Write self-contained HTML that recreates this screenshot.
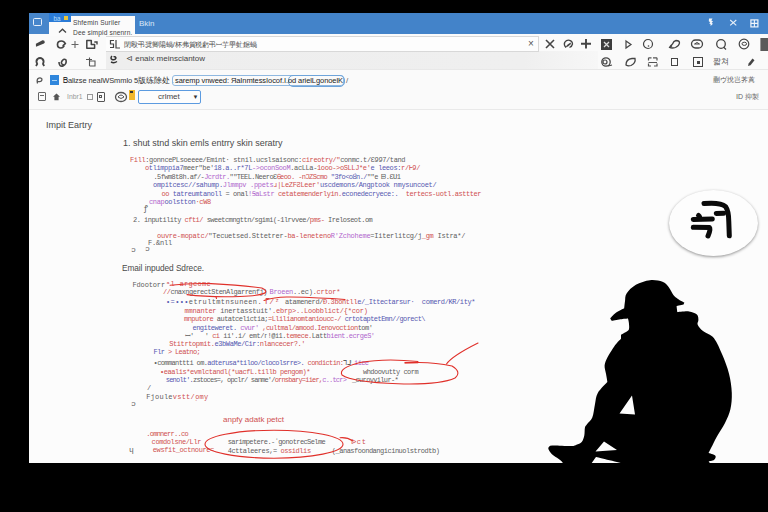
<!DOCTYPE html>
<html><head><meta charset="utf-8">
<style>
html,body{margin:0;padding:0;}
body{width:768px;height:512px;background:#000;position:relative;overflow:hidden;font-family:"Liberation Sans",sans-serif;}
.a{position:absolute;white-space:pre;}
.win{position:absolute;left:29px;top:13px;width:739px;height:450px;background:#fcfcfc;}
.tb{position:absolute;left:29px;top:13px;width:739px;height:21px;background:#4383c9;}
.m{font-family:"Liberation Mono",monospace;font-size:6.6px;line-height:8px;}
.s{font-size:9px;color:#333;}
.r{color:#c23a3a;}
.b{color:#3b3f9e;}
.k{color:#444;}
.p{color:#a04ac0;}
svg{position:absolute;overflow:visible;}
</style></head><body>
<div class="win"></div>
<div class="a" style="left:29px;top:33px;width:739px;height:76px;background:#fafafa;"></div>
<div class="tb"></div>
<!-- title bar left square -->
<div class="a" style="left:29px;top:13px;width:20px;height:20.5px;background:#4786cb;"></div>
<div class="a" style="left:33px;top:18.3px;width:9px;height:7.8px;border:1.2px solid #e8f0fa;border-top-width:1.8px;border-radius:1.5px;box-sizing:border-box;"></div>
<!-- small tab strip -->
<div class="a" style="left:49px;top:13px;width:22px;height:9.3px;background:#2b7bd6;"></div>
<div class="a" style="left:53.5px;top:14px;font-size:6.3px;color:#b8dcfa;line-height:9px;">ba</div>
<div class="a" style="left:64px;top:15.5px;width:4px;height:4px;background:#e9c53a;"></div>
<div class="a" style="left:49px;top:22.3px;width:22px;height:13.7px;background:#fbfbfb;"></div>
<div class="a" style="left:71px;top:16px;width:64px;height:20px;background:#fbfbfb;"></div>
<div class="a" style="left:73px;top:17.5px;font-size:6.6px;line-height:9px;color:#444;letter-spacing:0.15px;">Shfemin Suriler</div>
<div class="a" style="left:73px;top:27.5px;font-size:6.6px;line-height:9px;color:#444;letter-spacing:0.15px;">Dee simpid snenrn.</div>
<svg style="left:58px;top:28px" width="9" height="6"><path d="M1 4.5 L4.5 1.2 L8 4.5" fill="none" stroke="#444" stroke-width="1.3"/></svg>
<div class="a" style="left:139px;top:19px;font-size:8px;line-height:9px;color:#dbe8f7;">Bkin</div>

<!-- address bar area -->
<div class="a" style="left:106px;top:51px;width:492px;height:17.5px;background:linear-gradient(90deg,#eeeeee 0%,#efefef 85%,#f7f7f7 100%);"></div>
<div class="a" style="left:29px;top:68.5px;width:739px;height:1px;background:#e8e8e8;"></div>
<div class="a" style="left:106px;top:36px;width:432px;height:14px;background:#fdfdfd;border:1px solid #d8d8d8;border-left:none;"></div>
<div class="a" style="left:124px;top:39.5px;font-size:7.3px;line-height:9px;color:#444;letter-spacing:-0.05px;">閉殴弔奨卿陽蝸/杯弗賀税虧弔ꟷ芋甼虻鋸蝸</div>
<div class="a" style="left:126px;top:54px;font-size:8px;line-height:9px;color:#444;">⊲ enaix meinsciantow</div>
<div class="a" style="left:528px;top:38px;font-size:10px;line-height:12px;color:#555;">×</div>
<!-- row1 icons left -->
<svg style="left:34px;top:38px" width="14" height="12"><path d="M1.9 5.8 L8.5 2.3 Q10.8 2 10.8 4.5 L10 5.6 L2 8.8 Z" fill="#444"/></svg>
<svg style="left:55px;top:38px" width="12" height="12"><path d="M6.5 3 Q2.5 3 2.5 6.5 Q2.5 10 6 10 Q7.8 10 8.8 8.3 L8.3 7.4 L10.3 5.6 Q9 3 6.5 3 Z" fill="none" stroke="#444" stroke-width="1.7"/></svg>
<svg style="left:71px;top:40px" width="8" height="9"><path d="M0.5 4.5 H7.5 M4 1 V8" stroke="#666" stroke-width="1.1"/></svg>
<svg style="left:85px;top:38px" width="14" height="12"><path d="M1.8 2.5 H6.3 V6.4 H9.6 V10.2 H1.8 Z" fill="none" stroke="#444" stroke-width="1.5" stroke-linejoin="round"/><path d="M9.3 4 H12 V6.5" fill="none" stroke="#444" stroke-width="1.4"/></svg>
<svg style="left:109px;top:39px" width="12" height="11"><path d="M5 1.5 H1.5 V5 H4.5 V8.5 H1 M7 1 V9 H11" fill="none" stroke="#444" stroke-width="1.2"/></svg>
<!-- row2 icons left -->
<svg style="left:34px;top:56px" width="12" height="12"><path d="M2 10 L3.2 8 Q1.5 5 3.5 3 Q6 1 8.5 3 Q10.5 5 9 8 L10.2 10" fill="none" stroke="#444" stroke-width="1.8"/></svg>
<svg style="left:57px;top:56px" width="12" height="12"><path d="M2 6 Q2 11 6 10 Q10 8 9 4 Q7 2 5 5 Q3 8 7 9" fill="none" stroke="#444" stroke-width="1.6"/></svg>
<svg style="left:85px;top:57px" width="12" height="10"><path d="M1 2.5 H7 M4.5 0.5 V9 M4.5 4 H10 V9 H4.5" fill="none" stroke="#555" stroke-width="1.1"/></svg>
<svg style="left:109px;top:54px" width="10" height="10"><path d="M3 2 Q1 4 3 5.5 Q6 6.5 7 4 Q6 2 4.5 3 M2 8 Q5 9.5 8 7.5" fill="none" stroke="#333" stroke-width="1.5"/></svg>
<!-- row1 icons right -->
<svg style="left:544px;top:38px" width="12" height="12"><path d="M2 2 L10 10 M10 2 L2 10" stroke="#444" stroke-width="1.6"/></svg>
<svg style="left:562px;top:38px" width="13" height="12"><path d="M4 9.5 Q1.5 7 2.7 4.3 Q4.5 1.8 7.5 2.3 Q10.5 3 10.5 6 Q10 8.5 7.5 9.5" fill="none" stroke="#444" stroke-width="1.3"/><path d="M3.5 9.5 L5 7 L8.5 4.5 L9 6 L6 8.5 Z" fill="#444"/></svg>
<svg style="left:580px;top:39px" width="12" height="10"><path d="M1 4.8 H11 M6 0 V9.5" stroke="#444" stroke-width="1.9"/></svg>
<div class="a" style="left:601px;top:39px;width:11px;height:11px;background:#3d3d3d;"></div>
<svg style="left:601px;top:39px" width="11" height="11"><path d="M3 3 L8 8 M8 3 L3 8" stroke="#ddd" stroke-width="1.3"/></svg>
<svg style="left:624px;top:39px" width="10" height="11"><path d="M2 2 L7 5.5 L2 9 Z" fill="none" stroke="#444" stroke-width="1.2"/></svg>
<svg style="left:642px;top:38px" width="12" height="12"><circle cx="6" cy="6" r="4.5" fill="none" stroke="#444" stroke-width="1.2"/><circle cx="6.5" cy="8" r="0.8" fill="#444"/></svg>
<svg style="left:667px;top:38px" width="15" height="12"><path d="M2.5 9.5 Q3.5 7.5 5.5 6 Q6.5 3 9 2.5 Q12.5 2.5 12.5 5 Q12 8 8.5 9.5 Q5 10.5 2.5 9.5 Z M3 9.5 L5 7.5" fill="none" stroke="#444" stroke-width="1.3"/></svg>
<svg style="left:690px;top:38px" width="14" height="12"><rect x="1.5" y="2" width="11" height="8" rx="4" fill="none" stroke="#444" stroke-width="1.3"/><path d="M4.5 6 Q7 3 9.5 6 Z" fill="none" stroke="#444" stroke-width="1"/></svg>
<svg style="left:715px;top:38px" width="13" height="13"><circle cx="6" cy="6" r="4.3" fill="none" stroke="#444" stroke-width="1.3"/><path d="M8.5 9 L11 11.5" stroke="#444" stroke-width="1.3"/></svg>
<svg style="left:738px;top:38px" width="13" height="12"><circle cx="6" cy="6" r="4.8" fill="none" stroke="#444" stroke-width="1.2"/><ellipse cx="6.3" cy="5.8" rx="2.3" ry="1.6" fill="none" stroke="#444" stroke-width="1"/></svg>
<div class="a" style="left:760px;top:38px;width:8px;height:13px;background:#5a5a5a;border-left:1px solid #999;"></div>
<!-- row2 icons right -->
<svg style="left:600px;top:56px" width="13" height="12"><circle cx="6" cy="6" r="4.2" fill="none" stroke="#444" stroke-width="1.3"/><circle cx="5" cy="6" r="2" fill="none" stroke="#444" stroke-width="1.2"/><path d="M8 10 L12 9" stroke="#444" stroke-width="1.2"/></svg>
<svg style="left:624px;top:56px" width="13" height="12"><path d="M2 9 Q2 3 8 2.5 L11 2.5 Q12 7 7 9.5 Q4 10.5 2 9 Z" fill="none" stroke="#444" stroke-width="1.3"/></svg>
<svg style="left:647px;top:56px" width="12" height="12"><path d="M1.5 1.8 H4.5 M6 1.8 H10 M1.5 1.8 V4.5 M10 1.8 V4.5 M1.5 6.5 H10 M1.5 7.5 V10 H4 M10 7.5 V10 H7" fill="none" stroke="#555" stroke-width="1.2"/></svg>
<div class="a" style="left:671px;top:58px;width:7px;height:7.5px;border:1.3px solid #444;box-sizing:border-box;"></div>
<div class="a" style="left:693px;top:57px;width:10px;height:10px;border:1.3px solid #444;box-sizing:border-box;"></div>
<div class="a" style="left:696.5px;top:60.5px;width:3px;height:3px;background:#444;"></div>
<div class="a" style="left:713px;top:57px;font-size:7.5px;line-height:10px;color:#555;">짧쳐</div>
<svg style="left:746px;top:57px" width="10" height="10"><path d="M2 9 L2.6 6.5 L6.5 1.5 L8.5 3.3 L4.5 8.2 Z" fill="#444"/></svg>
<!-- title right icons -->
<svg style="left:707px;top:18px" width="8" height="9"><path d="M2 0.6 H5.5 L4.3 2.6 L6 3.3 L4.6 4.9 L6 5.7 L3.6 8 L3.6 6.2 L2.2 5.3 L3.3 4.2 L1.8 3.2 Z" fill="#f4f7fb"/></svg>
<svg style="left:729px;top:19px" width="9" height="8"><path d="M1.2 1 L7.3 6.3 M7.3 1 L1.2 6.3" stroke="#e8f0f9" stroke-width="1.1"/></svg>
<svg style="left:750px;top:18.5px" width="9" height="9"><rect x="0.9" y="0.9" width="7" height="7" fill="none" stroke="#eef4fb" stroke-width="1.2"/><path d="M0.9 4.4 H7.9 M4.4 0.9 V7.9" stroke="#eef4fb" stroke-width="1.1"/></svg>

<!-- row 3 -->
<svg style="left:35px;top:76px" width="9" height="9"><path d="M2.5 7.5 Q1.5 4 3 2.5 Q5 1 6.8 2.6 Q7.5 4.5 5.5 5.5 Q3.5 6 2 5" fill="none" stroke="#555" stroke-width="1.2"/></svg>
<div class="a" style="left:50px;top:75px;width:9px;height:10px;background:#2f86dc;"></div>
<div class="a" style="left:52px;top:80px;width:5px;height:1px;background:#a8d2f5;"></div>
<div class="a" style="left:63px;top:76px;font-size:7.5px;line-height:10px;color:#333;letter-spacing:-0.1px;">Ᏼalizse nealWSmmlo 5版练除处 .</div>
<div class="a" style="left:172px;top:75px;width:172px;height:11px;border:1px solid #8fb8e0;border-radius:3px;box-sizing:border-box;"></div>
<div class="a" style="left:288px;top:75px;width:57px;height:12px;border:1px solid #6ea4da;border-radius:5px;box-sizing:border-box;"></div>
<div class="a" style="left:175px;top:76px;font-size:7.5px;line-height:10px;color:#222;letter-spacing:-0.08px;">saremp vnweed: ЯaInmtessIocof.I.od arielLgonoelK</div>
<div class="a" style="left:346px;top:76px;font-size:8px;line-height:10px;color:#666;">/</div>
<!-- row 4 -->
<div class="a" style="left:38px;top:92px;width:8px;height:9px;border:1.2px solid #666;box-sizing:border-box;border-radius:1px;"></div>
<div class="a" style="left:40px;top:95px;width:4px;height:1px;background:#666;"></div>
<svg style="left:53px;top:93px" width="8" height="8"><path d="M3.5 0.5 L7 3.8 H5.6 V7.2 H1.4 V3.8 H0 Z" fill="#555"/></svg>
<div class="a" style="left:67px;top:92px;font-size:6.8px;line-height:10px;color:#999;">Inbr1</div>
<div class="a" style="left:86.5px;top:93.5px;width:6.5px;height:6.5px;border:1px solid #999;box-sizing:border-box;"></div>
<div class="a" style="left:97px;top:92px;width:8px;height:10px;border:1.2px solid #555;box-sizing:border-box;border-radius:1px;"></div>
<div class="a" style="left:99px;top:95px;width:3px;height:3px;border:1px solid #555;box-sizing:border-box;"></div>
<svg style="left:114px;top:91px" width="14" height="12"><ellipse cx="7" cy="6" rx="5.5" ry="4.5" fill="none" stroke="#555" stroke-width="1.3"/><path d="M4 6 Q7 2 10 6 Q7 9 4 6" fill="none" stroke="#555" stroke-width="1"/></svg>
<div class="a" style="left:129px;top:90px;width:6px;height:10px;background:#f2b82d;"></div>
<div class="a" style="left:130px;top:91px;width:3px;height:2px;background:#333;"></div>
<div class="a" style="left:138px;top:89.5px;width:63px;height:14px;border:1.3px solid #5c9be0;border-radius:2px;box-sizing:border-box;background:#fdfdfd;"></div>
<div class="a" style="left:158px;top:92px;font-size:8px;line-height:10px;color:#444;">crlmet</div>
<div class="a" style="left:192.5px;top:92px;font-size:6px;line-height:10px;color:#333;">▼</div>
<!-- right text -->
<div class="a" style="left:713px;top:75px;font-size:7px;line-height:10px;color:#555;">蒯ヴ挩岂荠蒖</div>
<div class="a" style="left:736px;top:92px;font-size:7px;line-height:10px;color:#666;">ⅠD 抑製</div>
<div class="a" style="left:29px;top:108.7px;width:739px;height:1px;background:#e9e9e9;"></div>
<div class="a" id="sx1" style="left:46.0px;top:119.5px;font-size:9.0px;line-height:10px;letter-spacing:-0.001px;"><span style="color:#4a4a4a">Impit Eartry</span></div>
<div class="a" id="sx2" style="left:123.0px;top:137.5px;font-size:9.0px;line-height:10px;letter-spacing:-0.025px;"><span style="color:#4a4a4a">1. shut stnd skin emls entrry skin seratry</span></div>
<div class="a m" style="left:130.0px;top:156.3px;font-size:7.0px;letter-spacing:-0.38px;"><span style="color:#cf5050">Fill</span><span style="color:#5e5e5e">:gonncePLsoeeee/Emint· stnil.ucslsaisonc:</span><span style="color:#cf5050">cireotry/&quot;</span><span style="color:#5e5e5e">conmc.t/Ɛ997/tand</span></div>
<div class="a m" style="left:145.0px;top:164.3px;font-size:7.0px;letter-spacing:-0.38px;"><span style="color:#cf5050">o</span><span style="color:#5558b0">tlimppia7</span><span style="color:#5e5e5e">meer&quot;be&#x27;</span><span style="color:#5558b0">18.a..r*7L</span><span style="color:#b066cc">-&gt;oconSooM</span><span style="color:#5e5e5e">.acLLa-</span><span style="color:#cf5050">1ooo-&gt;oSLLJ*e&#x27;</span><span style="color:#5558b0">e leeos:</span><span style="color:#cf5050">r/Ꮀ9/</span></div>
<div class="a m" style="left:153.5px;top:173.3px;font-size:7.0px;letter-spacing:-0.58px;"><span style="color:#5e5e5e">.5fwm8t8h.af/-</span><span style="color:#b066cc">Jcrdtr.</span><span style="color:#5e5e5e">&quot;&quot;TEEL.NeeroƐ</span><span style="color:#cf5050">Ꮾeoo. -nƆZScmo</span><span style="color:#5558b0"> &quot;3fo&lt;oȢn./</span><span style="color:#5e5e5e">&quot;&quot;e ᗸ.ƐՍ1</span></div>
<div class="a m" style="left:153.0px;top:181.3px;font-size:7.0px;letter-spacing:-0.32px;"><span style="color:#5558b0">ompitcesc//sahump.</span><span style="color:#b066cc">Jlmmpv .ppets</span><span style="color:#cf5050">ɹ|LeZFƧLeer&#x27;</span><span style="color:#5558b0">uscdemons/Angptook nmysuncoet/</span></div>
<div class="a m" style="left:161.5px;top:190.3px;font-size:7.0px;letter-spacing:-0.44px;"><span style="color:#cf5050">oo </span><span style="color:#5558b0">tatreumtanoll</span><span style="color:#5e5e5e"> = onal</span><span style="color:#b066cc">!ꞨaLstr</span><span style="color:#cf5050"> cetatemenderlyin.</span><span style="color:#5558b0">econedecryece:.</span><span style="color:#cf5050">  tertecs-uotl.asttter</span></div>
<div class="a m" style="left:149.0px;top:197.8px;font-size:7.0px;letter-spacing:-0.33px;"><span style="color:#b066cc">cnap</span><span style="color:#5558b0">oolstton</span><span style="color:#cf5050">·cW8</span></div>
<div class="a m" style="left:144.0px;top:205.3px;font-size:8.0px;letter-spacing:1.20px;"><span style="color:#5e5e5e">ꝭ</span></div>
<div class="a m" style="left:133.0px;top:216.3px;font-size:7.0px;letter-spacing:-0.52px;"><span style="color:#5e5e5e">2. </span><span style="color:#5e5e5e">inputility </span><span style="color:#cf5050">cfti/ </span><span style="color:#5e5e5e">sweetcmngttn/sgimi(-1lrvvee/</span><span style="color:#cf5050">pms- </span><span style="color:#5e5e5e">Ireloseot.om</span></div>
<div class="a m" style="left:157.0px;top:231.8px;font-size:7.0px;letter-spacing:-0.25px;"><span style="color:#cf5050">ouvre-mopatc/</span><span style="color:#5e5e5e">&quot;Tecuetsed.Sttetrer-</span><span style="color:#cf5050">ba-leneteno</span><span style="color:#b066cc">R&#x27;Zchoheme</span><span style="color:#5e5e5e">=Iiterlitcg/j</span><span style="color:#cf5050">_gm</span><span style="color:#5e5e5e"> Istra*/</span></div>
<div class="a m" style="left:148.0px;top:239.3px;font-size:7.0px;letter-spacing:-0.20px;"><span style="color:#5e5e5e">F.&amp;nll</span></div>
<div class="a m" style="left:131.0px;top:246.3px;font-size:8.0px;letter-spacing:1.20px;"><span style="color:#5e5e5e">ɔ</span></div>
<div class="a m" style="left:145.0px;top:245.3px;font-size:8.0px;letter-spacing:1.20px;"><span style="color:#5e5e5e">ɔ</span></div>
<div class="a" id="sx3" style="left:122.0px;top:263.0px;font-size:8.3px;line-height:10px;letter-spacing:-0.071px;"><span style="color:#4a4a4a">Email inpuded Sdrece.</span></div>
<div class="a m" style="left:132.5px;top:280.8px;font-size:7.0px;letter-spacing:-0.14px;"><span style="color:#5e5e5e">Fdootorr</span></div>
<div class="a m" style="left:166.0px;top:279.8px;font-size:7.0px;letter-spacing:0.30px;"><span style="color:#cf5050">ᵃl argcome</span></div>
<div class="a m" style="left:163.0px;top:288.3px;font-size:7.0px;letter-spacing:-0.49px;"><span style="color:#cf5050">//</span><span style="color:#5e5e5e">cnaxngerectStenAlgarrenfj)</span></div>
<div class="a m" style="left:269.5px;top:288.3px;font-size:7.0px;letter-spacing:-0.28px;"><span style="color:#b066cc">Broeen</span><span style="color:#5e5e5e">..ec)</span><span style="color:#cf5050">.crtor*</span></div>
<div class="a m" style="left:166.0px;top:298.3px;font-size:7.0px;letter-spacing:0.37px;"><span style="color:#5558b0">•=•••</span><span style="color:#5e5e5e">etrultmtnsuneen.</span></div>
<div class="a m" style="left:264.5px;top:298.3px;font-size:8.0px;letter-spacing:0.70px;"><span style="color:#cf5050">ᒥ/</span><span style="color:#cf5050">ᶻ</span></div>
<div class="a m" style="left:285.0px;top:298.3px;font-size:7.0px;letter-spacing:-0.40px;"><span style="color:#5e5e5e">atamenerd/</span><span style="color:#cf5050">Ɖ.3bontll</span><span style="color:#5558b0">e/_Ittectarsur·  comerd/KɌ/ity*</span></div>
<div class="a m" style="left:184.5px;top:306.5px;font-size:7.0px;letter-spacing:-0.22px;"><span style="color:#cf5050">mmnanter </span><span style="color:#5e5e5e">inertasstuit&#x27;</span><span style="color:#cf5050">.ebrp&gt;..Loobbl</span><span style="color:#cf5050">ict/{*cor)</span></div>
<div class="a m" style="left:184.0px;top:315.1px;font-size:7.0px;letter-spacing:-0.55px;"><span style="color:#cf5050">mnputore </span><span style="color:#5e5e5e">autatcelictia;</span><span style="color:#cf5050">=Llilianomtanioucc-/ </span><span style="color:#5558b0">crtotaptetEmn//gorect\</span></div>
<div class="a m" style="left:192.5px;top:323.8px;font-size:7.0px;letter-spacing:-0.53px;"><span style="color:#5558b0">engiteweret. </span><span style="color:#b066cc">cvur&#x27;</span><span style="color:#cf5050"> ,cultmal/amood.Ienovoction</span><span style="color:#5e5e5e">tom&#x27;</span></div>
<div class="a m" style="left:184.5px;top:331.8px;font-size:7.0px;letter-spacing:-0.51px;"><span style="color:#5e5e5e">ꟷ&#x27;   &#x27;</span><span style="color:#cf5050"> ci </span><span style="color:#5e5e5e">ii&#x27;.i/ emt/ᴦ!@i1.</span><span style="color:#cf5050">temece.</span><span style="color:#5e5e5e">Latt</span><span style="color:#b066cc">bient.ecrgeS&#x27;</span></div>
<div class="a m" style="left:169.3px;top:340.1px;font-size:7.0px;letter-spacing:-0.43px;"><span style="color:#cf5050">Stitrtopmit.</span><span style="color:#5558b0">e3bWaMe/Cir:</span><span style="color:#cf5050">nlancecer?.&#x27;</span></div>
<div class="a m" style="left:153.6px;top:348.3px;font-size:7.0px;letter-spacing:-0.63px;"><span style="color:#5558b0">Flr</span><span style="color:#cf5050"> &gt; Leatno;</span></div>
<div class="a m" style="left:153.6px;top:359.3px;font-size:7.0px;letter-spacing:-0.62px;"><span style="color:#5e5e5e">•commanttti om.</span><span style="color:#5558b0">adterusa*tiloo/clocolsrre&gt;.</span><span style="color:#cf5050"> condictin:</span><span style="color:#5e5e5e">ᒣᒧᑊ</span><span style="color:#b066cc"> iiee</span></div>
<div class="a m" style="left:160.0px;top:367.8px;font-size:7.0px;letter-spacing:-0.45px;"><span style="color:#cf5050">•eaalis*evmlctandl(*uacfL.tillb pengom)*</span></div>
<div class="a m" style="left:165.8px;top:376.4px;font-size:7.0px;letter-spacing:-0.80px;"><span style="color:#5558b0">senolt&#x27;.</span><span style="color:#5e5e5e">zstoces=, opclr/ sanme&#x27;/</span><span style="color:#cf5050">ornsbary=iier,</span><span style="color:#b066cc">c..tcr&gt;</span></div>
<div class="a m" style="left:363.0px;top:367.8px;font-size:7.0px;letter-spacing:-0.53px;"><span style="color:#5e5e5e">whdoovutty corm</span></div>
<div class="a m" style="left:352.0px;top:376.3px;font-size:7.0px;letter-spacing:-0.66px;"><span style="color:#5e5e5e">_curoyvilur-*</span></div>
<div class="a m" style="left:147.0px;top:383.8px;font-size:7.0px;letter-spacing:0.80px;"><span style="color:#5e5e5e">/</span></div>
<div class="a m" style="left:146.2px;top:393.2px;font-size:7.0px;letter-spacing:0.23px;"><span style="color:#5e5e5e">Fjoule</span><span style="color:#cf5050">vstt/ͺomy</span></div>
<div class="a m" style="left:131.0px;top:399.5px;font-size:8.0px;letter-spacing:1.20px;"><span style="color:#5e5e5e">ɔ</span></div>
<div class="a" id="sx4" style="left:223.0px;top:414.8px;font-size:8.0px;line-height:10px;letter-spacing:0.004px;"><span style="color:#cf5050">anpfy adatk petct</span></div>
<div class="a m" style="left:146.2px;top:429.5px;font-size:7.0px;letter-spacing:-0.72px;"><span style="color:#cf5050">.omnnerr..co</span></div>
<div class="a m" style="left:151.6px;top:438.2px;font-size:7.0px;letter-spacing:-0.40px;"><span style="color:#cf5050">comdolsne/Llr</span></div>
<div class="a m" style="left:152.8px;top:446.4px;font-size:7.0px;letter-spacing:-0.38px;"><span style="color:#cf5050">ewsfit_octnoure=</span></div>
<div class="a m" style="left:129.0px;top:446.4px;font-size:8.0px;letter-spacing:1.20px;"><span style="color:#5e5e5e">ɥ</span></div>
<div class="a m" style="left:227.7px;top:438.4px;font-size:7.0px;letter-spacing:-0.59px;"><span style="color:#5e5e5e">sarimpetere.-ʻgonotrecSelme</span></div>
<div class="a m" style="left:227.7px;top:446.5px;font-size:7.0px;letter-spacing:-0.43px;"><span style="color:#5e5e5e">4cttaleeres,= </span><span style="color:#cf5050">ossidlis</span></div>
<div class="a m" style="left:351.0px;top:437.8px;font-size:7.0px;letter-spacing:0.80px;"><span style="color:#cf5050">ᐅct</span></div>
<div class="a m" style="left:331.8px;top:446.5px;font-size:7.0px;letter-spacing:-0.49px;"><span style="color:#5e5e5e">(_anasfoondangicinuolstrodtb)</span></div>

<svg style="left:0;top:0" width="768" height="512" viewBox="0 0 768 512">
<g fill="none" stroke="#e0302a" stroke-width="1.1" stroke-linecap="round">
<path d="M170 285.3 Q190 283 211 283.6 Q240 285 261.8 288 Q267 290.5 265.5 292.5 Q262 295.5 240 296.5 Q210 297.5 187 294.6"/>
<path d="M264 300.5 Q275 296.5 290 297 Q320 297.5 345 299.5"/>
<path d="M216 296.8 L216.5 298.5"/>
<path d="M405 363 Q430 361 452 366 Q462 372 455 378 Q440 385 398 383.8 Q352 382 342 375 Q338 368 360 362.5 Q385 358 418 361.5"/>
<path d="M446.5 364 Q452 356 478 343"/>
<path d="M405 362.6 L418 362.6"/>
<ellipse cx="274" cy="444.2" rx="69" ry="14"/>
<path d="M340 437.7 Q347 437 353 441"/>
</g>
</svg>

<svg style="left:0;top:0" width="768" height="512" viewBox="0 0 768 512">
<path fill="#000" d="M650.0 280.2 C654.4 279.7 659.4 280.6 662.5 281.8 C665.6 283.0 666.9 285.0 668.8 287.2 C670.6 289.4 671.9 293.1 673.4 295.0 C674.9 296.9 676.2 297.6 678.0 298.9 C679.8 300.2 684.4 302.6 684.4 302.6 C684.4 302.6 683.6 304.6 683.6 304.6 C683.6 304.6 676.6 306.2 676.6 306.2 C676.6 306.2 677.3 312.2 677.3 312.2 C677.3 312.2 685.7 311.0 689.0 311.4 C692.3 311.8 695.3 313.1 696.9 314.5 C698.5 315.9 698.3 318.3 698.4 320.0 C698.5 321.7 696.9 322.9 697.7 324.7 C698.5 326.5 700.3 328.8 703.0 331.0 C705.7 333.2 710.8 334.3 714.0 338.2 C717.2 342.1 719.7 348.7 722.2 354.6 C724.7 360.5 727.4 367.4 729.0 373.8 C730.6 380.2 731.6 387.0 731.8 392.9 C732.0 398.8 731.5 404.3 730.4 409.3 C729.3 414.3 727.3 418.4 725.0 423.0 C722.7 427.6 719.1 432.6 716.8 436.7 C714.5 440.8 712.7 444.9 711.3 447.6 C709.9 450.3 708.6 453.1 708.6 453.1 C708.6 453.1 714.5 454.7 715.4 455.8 C716.3 456.9 715.1 459.1 714.0 460.0 C712.9 460.9 708.6 461.3 708.6 461.3 C708.6 461.3 710.0 463.5 710.0 463.5 C710.0 463.5 623.3 463.5 623.3 463.5 C623.3 463.5 596.0 457.0 596.0 457.0 C596.0 457.0 591.4 463.5 591.4 463.5 C591.4 463.5 562.8 463.5 562.8 463.5 C562.8 463.5 563.0 462.6 562.0 461.7 C561.0 460.8 558.7 459.1 557.0 457.8 C555.3 456.5 553.1 455.3 551.7 453.9 C550.3 452.5 548.9 450.5 548.5 449.3 C548.1 448.1 548.4 447.4 549.1 446.7 C549.9 446.0 549.3 445.5 553.0 445.4 C556.7 445.3 567.3 446.1 571.2 446.0 C575.2 445.9 574.8 445.3 576.5 444.7 C578.2 444.1 580.4 443.6 581.7 442.1 C583.0 440.6 583.8 438.0 584.3 435.6 C584.8 433.2 584.5 429.7 584.9 427.8 C585.3 425.9 585.6 426.1 586.8 424.4 C588.0 422.7 590.9 420.9 592.3 417.5 C593.7 414.1 594.1 408.0 595.0 403.9 C595.9 399.8 595.7 396.5 597.8 392.9 C599.9 389.2 607.4 382.0 607.4 382.0 C607.4 382.0 606.5 376.5 606.0 373.8 C605.5 371.1 604.4 368.3 604.6 365.6 C604.8 362.9 605.8 360.6 607.4 357.4 C609.0 354.2 612.6 348.8 614.2 346.4 C615.8 343.9 616.1 344.0 617.2 342.7 C618.3 341.4 621.0 338.8 621.0 338.8 C621.0 338.8 621.0 334.8 621.0 334.8 C621.0 334.8 623.7 333.4 625.0 332.5 C626.3 331.6 628.2 331.0 628.9 329.4 C629.5 327.8 629.0 324.9 628.9 323.1 C628.8 321.3 628.0 318.4 628.0 318.4 C628.0 318.4 623.0 318.8 620.3 319.2 C617.6 319.6 611.7 320.8 611.7 320.8 C611.7 320.8 610.2 318.4 610.2 318.4 C610.2 318.4 613.3 314.7 615.6 313.0 C617.9 311.3 624.2 308.3 624.2 308.3 C624.2 308.3 624.6 303.7 625.0 301.2 C625.4 298.8 624.8 296.1 626.6 293.4 C628.4 290.7 632.0 287.0 635.9 284.8 C639.8 282.6 645.6 280.7 650.0 280.2 Z"/>
<path fill="#fcfcfc" d="M632 395.5 L619.5 413.5 L635 414.5 Z M595.5 451.5 L604 441.5 L617 450 Z"/>
</svg>

<div class="a" style="left:669px;top:190px;width:89px;height:66px;border-radius:50%;background:#fdfdfd;box-shadow:0 1px 3px rgba(0,0,0,0.42);"></div>
<svg style="left:0;top:0" width="768" height="512" viewBox="0 0 768 512">
<g fill="none" stroke="#0a0a0a" stroke-width="5" stroke-linecap="round" stroke-linejoin="round">
<path d="M704 203.5 C712 202.8 721 202.5 725.5 206.5 Q728.8 211 728.8 222 L729.3 235.8"/>
<path d="M716.3 213.5 L723.6 213.2"/>
<path d="M698.5 215.5 L699.5 216.5"/>
<path d="M693.3 219.4 L712.3 218.9"/>
<path d="M693.3 227.2 L709.5 227.6 Q711 229 708 236"/>
</g>
</svg>
<div class="a" style="left:0;top:463px;width:768px;height:49px;background:#000"></div>
</body></html>
